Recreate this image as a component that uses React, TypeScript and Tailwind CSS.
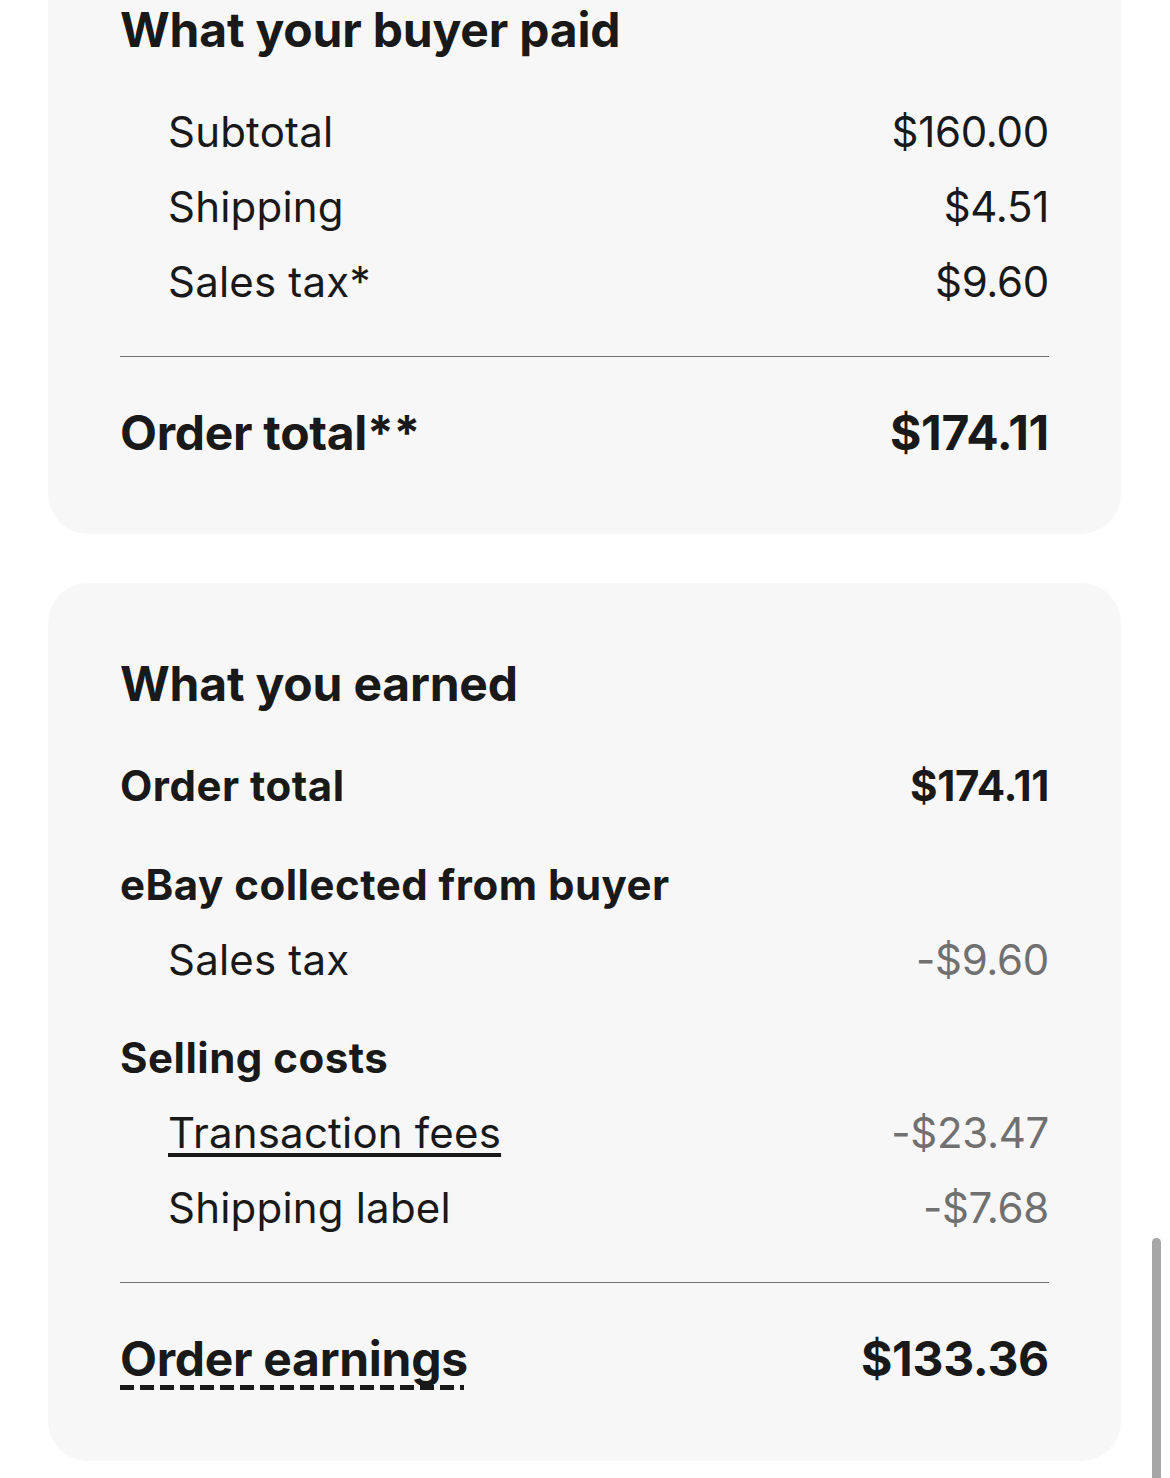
const Row = ({ label, value, muted, indent, bold, big, link }: { label: string; value?: string; muted?: boolean; indent?: boolean; bold?: boolean; big?: boolean; link?: "solid" | "dashed" }) => (
  <div className={`flex items-center justify-between ${big ? "h-[76px]" : "h-[75px]"}`}>
    <span
      className={`relative ${indent ? "ml-[48px]" : ""} ${bold ? "font-bold" : "font-normal"} ${
        big ? "text-[48px] tracking-[-0.3px]" : bold ? "text-[42px] tracking-[0.5px]" : "text-[42px] tracking-[0.2px]"
      } ${link === "solid" ? "underline decoration-[4px] underline-offset-[5px]" : ""}`}
    >
      {label}
      {link === "dashed" && (
        <span className="absolute left-0 right-[4px] bottom-[5px] h-[5px] bg-[repeating-linear-gradient(to_right,#191919_0px,#191919_14px,transparent_14px,transparent_20px)]" />
      )}
    </span>
    {value && (
      <span className={`tracking-[-0.3px] ${bold ? "font-bold" : "font-normal"} ${big ? "text-[48px]" : "text-[42px]"} ${muted ? "text-[#707070]" : ""}`}>
        {value}
      </span>
    )}
  </div>
)

const App = () => {
  return (
    <div className="relative h-[1478px] overflow-hidden bg-white text-[#191919] font-['Inter','Noto_Sans',sans-serif]">
      <div className="pl-[48px] pr-[49px]">
        {/* buyer paid */}
        <div className="bg-[#f7f7f7] rounded-b-[40px] px-[72px] pb-[63px]">
          <h2 className="h-[60px] flex items-center text-[48px] font-bold tracking-[-0.2px]">What your buyer paid</h2>
          <div className="mt-[34px]">
            <Row label="Subtotal" value="$160.00" indent />
            <Row label="Shipping" value="$4.51" indent />
            <Row label="Sales tax*" value="$9.60" indent />
          </div>
          <div className="mt-[37px] h-px bg-[#707070]" />
          <div className="mt-[38px]">
            <Row label="Order total**" value="$174.11" bold big />
          </div>
        </div>

        {/* earned */}
        <div className="mt-[49px] bg-[#f7f7f7] rounded-[40px] px-[72px] pt-[71px] pb-[64px]">
          <h2 className="h-[60px] flex items-center text-[48px] font-bold tracking-[-0.2px]">What you earned</h2>
          <div className="mt-[34px]">
            <Row label="Order total" value="$174.11" bold />
          </div>
          <div className="mt-[24px]">
            <Row label="eBay collected from buyer" bold />
            <Row label="Sales tax" value="-$9.60" indent muted />
          </div>
          <div className="mt-[23px]">
            <Row label="Selling costs" bold />
            <Row label="Transaction fees" value="-$23.47" indent muted link="solid" />
            <Row label="Shipping label" value="-$7.68" indent muted />
          </div>
          <div className="mt-[37px] h-px bg-[#707070]" />
          <div className="mt-[38px]">
            <Row label="Order earnings" value="$133.36" bold big link="dashed" />
          </div>
        </div>
      </div>

      <div className="absolute right-[9px] top-[1238px] w-[9px] h-[260px] rounded-full bg-[#a6a6a6]" />
    </div>
  )
}

export default App
